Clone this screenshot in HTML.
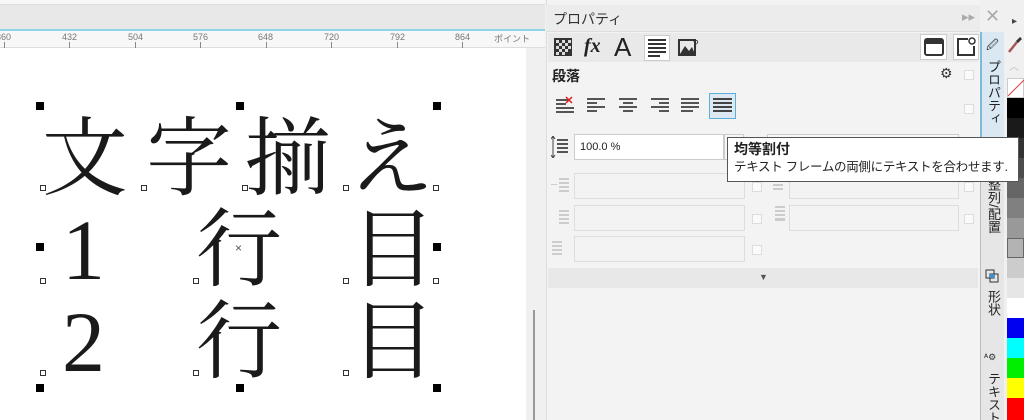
<!DOCTYPE html>
<html style="width:1024px;height:420px;overflow:hidden"><head><meta charset="utf-8"><style>
*{margin:0;padding:0;box-sizing:border-box}
body{width:1024px;height:420px;overflow:hidden;background:#f0f0f0;font-family:"Liberation Sans","Noto Sans CJK JP",sans-serif;position:relative}
.a{position:absolute}
.h{position:absolute;width:8px;height:8px;background:#000}
.s{position:absolute;width:6px;height:6px;border:1px solid #333;background:#fff}
.ch{position:absolute;font-family:"Liberation Serif","Noto Serif CJK JP",serif;font-size:86px;line-height:86px;color:#1a1a1a}
.inp{position:absolute;height:26px;border:1px solid #ddd;background:#f3f3f3}
.cb{position:absolute;width:10px;height:10px;border:1px solid #ddd;background:#fafafa}
.sw{position:absolute;left:1007px;width:17px;height:20px}
.vt{position:absolute;writing-mode:vertical-rl;font-size:13px;color:#222;white-space:nowrap;height:90px;overflow:hidden}
</style></head><body>
<div class="a" style="left:0;top:0;width:545px;height:5px;background:#f7f7f7;border-bottom:1px solid #ddd"></div>
<div class="a" style="left:0;top:5px;width:545px;height:25px;background:#e8e8e8"></div>
<div class="a" style="left:0;top:29px;width:545px;height:2px;background:#8fd3e6"></div>
<div class="a" style="left:0;top:31px;width:545px;height:17px;background:#f7f7f7;border-bottom:1px solid #ddd;font-size:9px;color:#777">
<span class="a" style="left:-4px;top:1px">360</span><span class="a" style="left:62px;top:1px">432</span><span class="a" style="left:128px;top:1px">504</span><span class="a" style="left:193px;top:1px">576</span><span class="a" style="left:258px;top:1px">648</span><span class="a" style="left:324px;top:1px">720</span><span class="a" style="left:390px;top:1px">792</span><span class="a" style="left:455px;top:1px">864</span><span class="a" style="left:494px;top:1px">ポイント</span>
<svg class="a" style="left:0;top:9px" width="545" height="8"><g stroke="#888"><line x1="4.5" y1="2" x2="4.5" y2="8"/><line x1="69.5" y1="2" x2="69.5" y2="8"/><line x1="135.5" y1="2" x2="135.5" y2="8"/><line x1="200.5" y1="2" x2="200.5" y2="8"/><line x1="266.5" y1="2" x2="266.5" y2="8"/><line x1="331.5" y1="2" x2="331.5" y2="8"/><line x1="397.5" y1="2" x2="397.5" y2="8"/><line x1="462.5" y1="2" x2="462.5" y2="8"/></g></svg>
</div>
<div class="a" style="left:0;top:48px;width:526px;height:372px;background:#fff"></div>
<div class="a" style="left:533px;top:310px;width:2px;height:110px;background:#999"></div>
<div class="ch" style="left:42px;top:116px">文</div>
<div class="ch" style="left:146px;top:116px">字</div>
<div class="ch" style="left:245px;top:116px">揃</div>
<div class="ch" style="left:348px;top:116px">え</div>
<div class="ch" style="left:62px;top:207px">1</div>
<div class="ch" style="left:196px;top:207px">行</div>
<div class="ch" style="left:350px;top:207px">目</div>
<div class="ch" style="left:62px;top:299px">2</div>
<div class="ch" style="left:196px;top:299px">行</div>
<div class="ch" style="left:350px;top:299px">目</div>
<div class="a" style="left:235px;top:241px;font-size:12px;color:#555">×</div>
<div class="h" style="left:36px;top:102px"></div><div class="h" style="left:236px;top:102px"></div><div class="h" style="left:433px;top:102px"></div>
<div class="h" style="left:36px;top:243px"></div><div class="h" style="left:433px;top:243px"></div>
<div class="h" style="left:36px;top:384px"></div><div class="h" style="left:236px;top:384px"></div><div class="h" style="left:433px;top:384px"></div>
<div class="s" style="left:40px;top:185px"></div><div class="s" style="left:141px;top:185px"></div><div class="s" style="left:242px;top:185px"></div><div class="s" style="left:343px;top:185px"></div><div class="s" style="left:433px;top:185px"></div>
<div class="s" style="left:40px;top:278px"></div><div class="s" style="left:193px;top:278px"></div><div class="s" style="left:343px;top:278px"></div><div class="s" style="left:433px;top:278px"></div>
<div class="s" style="left:40px;top:370px"></div><div class="s" style="left:193px;top:370px"></div><div class="s" style="left:343px;top:370px"></div>
<div class="a" style="left:546px;top:0;width:434px;height:420px;background:#f3f3f3;border-left:1px solid #ddd"></div>
<div class="a" style="left:546px;top:5px;width:434px;height:27px;background:#ececec;border-bottom:1px solid #ddd"></div>
<div class="a" style="left:553px;top:9px;font-size:14px;color:#333">プロパティ</div>
<div class="a" style="left:962px;top:9px;font-size:13px;color:#aaa">▸▸</div>
<div class="a" style="left:985px;top:6px;font-size:18px;color:#aaa">✕</div>
<div class="a" style="left:548px;top:33px;width:430px;height:29px;background:#e9e9e9"></div>
<svg class="a" style="left:553px;top:37px" width="20" height="20"><rect x="1" y="1" width="18" height="18" fill="#333"/><g fill="#ddd"><rect x="3" y="3" width="3" height="3"/><rect x="9" y="3" width="3" height="3"/><rect x="15" y="3" width="3" height="3"/><rect x="6" y="6" width="3" height="3"/><rect x="12" y="6" width="3" height="3"/><rect x="3" y="9" width="3" height="3"/><rect x="9" y="9" width="3" height="3"/><rect x="15" y="9" width="3" height="3"/><rect x="6" y="12" width="3" height="3"/><rect x="12" y="12" width="3" height="3"/><rect x="3" y="15" width="3" height="3"/><rect x="9" y="15" width="3" height="3"/></g></svg>
<div class="a" style="left:584px;top:35px;font-size:20px;font-style:italic;font-weight:bold;font-family:'Liberation Serif',serif;color:#222">fx</div>
<div class="a" style="left:614px;top:32px;font-size:26px;color:#222">A</div>
<div class="a" style="left:644px;top:35px;width:26px;height:26px;background:#fff;border:1px solid #ccc"></div>
<svg class="a" style="left:648px;top:39px" width="18" height="18"><g fill="#333"><rect y="0" width="18" height="2"/><rect y="4" width="18" height="2"/><rect y="8" width="18" height="2"/><rect y="12" width="18" height="2"/><rect y="16" width="12" height="2"/></g></svg>
<svg class="a" style="left:678px;top:37px" width="22" height="20"><rect x="1" y="3" width="16" height="15" fill="none" stroke="#333" stroke-width="2"/><path d="M2 17 L7 9 L11 14 L14 10 L17 17Z" fill="#333"/><text x="15" y="10" font-size="10" font-family="Liberation Sans" fill="#333">?</text></svg>
<div class="a" style="left:920px;top:34px;width:27px;height:26px;background:#fff;border:1px solid #ccc"></div>
<svg class="a" style="left:924px;top:38px" width="20" height="18"><rect x="1" y="1" width="18" height="16" rx="2" fill="none" stroke="#333" stroke-width="2"/><rect x="1" y="1" width="18" height="5" fill="#333"/></svg>
<div class="a" style="left:953px;top:34px;width:26px;height:26px;background:#fff;border:1px solid #ccc"></div>
<svg class="a" style="left:956px;top:37px" width="20" height="20"><path d="M12 2 H2 V18 H18 V9" fill="none" stroke="#333" stroke-width="2"/><circle cx="16" cy="4" r="3" fill="none" stroke="#333" stroke-width="1.5"/></svg>
<div class="a" style="left:552px;top:66px;font-size:14px;font-weight:bold;color:#222">段落</div>
<div class="a" style="left:940px;top:65px;font-size:14px;color:#333">⚙</div>
<div class="cb" style="left:964px;top:70px"></div>
<svg class="a" style="left:555px;top:96px" width="180" height="20"><g fill="#555">
<rect x="1" y="3" width="14" height="2"/><rect x="1" y="7" width="10" height="2"/><rect x="1" y="11" width="18" height="2"/><rect x="1" y="15" width="18" height="2"/>
<rect x="32" y="2" width="18" height="2"/><rect x="32" y="6" width="10" height="2"/><rect x="32" y="10" width="18" height="2"/><rect x="32" y="14" width="10" height="2"/>
<rect x="64" y="2" width="18" height="2"/><rect x="68" y="6" width="10" height="2"/><rect x="64" y="10" width="18" height="2"/><rect x="68" y="14" width="10" height="2"/>
<rect x="96" y="2" width="18" height="2"/><rect x="104" y="6" width="10" height="2"/><rect x="96" y="10" width="18" height="2"/><rect x="104" y="14" width="10" height="2"/>
<rect x="126" y="2" width="18" height="2"/><rect x="126" y="6" width="18" height="2"/><rect x="126" y="10" width="18" height="2"/><rect x="126" y="14" width="12" height="2"/>
</g><path d="M11 1 L17 7 M17 1 L11 7" stroke="#d22" stroke-width="1.5"/></svg>
<div class="a" style="left:709px;top:93px;width:27px;height:26px;background:#dce9f3;border:1px solid #5ab0d8"></div>
<svg class="a" style="left:713px;top:98px" width="19" height="16"><g fill="#444"><rect y="0" width="19" height="2"/><rect y="4" width="19" height="2"/><rect y="8" width="19" height="2"/><rect y="12" width="19" height="2"/></g></svg>
<div class="cb" style="left:964px;top:104px"></div>
<svg class="a" style="left:551px;top:136px" width="18" height="22"><path d="M2 1V21 M0 3 L2 0 L4 3 M0 19 L2 22 L4 19" stroke="#444" fill="none"/><g fill="#555"><rect x="6" y="3" width="11" height="2"/><rect x="6" y="7" width="11" height="2"/><rect x="6" y="11" width="11" height="2"/><rect x="6" y="15" width="11" height="2"/></g></svg>
<div class="a" style="left:574px;top:134px;width:150px;height:26px;background:#fff;border:1px solid #ccc;font-size:11px;color:#222;padding:6px 5px">100.0 %</div>
<div class="a" style="left:724px;top:134px;width:20px;height:26px;border:1px solid #ccc;background:#f7f7f7"></div>
<div class="a" style="left:767px;top:134px;width:192px;height:26px;border:1px solid #ccc;background:#f7f7f7"></div>
<div class="inp" style="left:574px;top:173px;width:171px"></div><div class="cb" style="left:752px;top:182px"></div>
<div class="inp" style="left:789px;top:173px;width:170px"></div><div class="cb" style="left:964px;top:182px"></div>
<div class="inp" style="left:574px;top:205px;width:171px"></div><div class="cb" style="left:752px;top:214px"></div>
<div class="inp" style="left:789px;top:205px;width:170px"></div><div class="cb" style="left:964px;top:214px"></div>
<div class="inp" style="left:574px;top:236px;width:171px"></div><div class="cb" style="left:752px;top:245px"></div>
<svg class="a" style="left:551px;top:176px" width="20" height="90"><g fill="#ccc"><rect x="8" y="2" width="10" height="2"/><rect x="8" y="6" width="10" height="2"/><rect x="8" y="10" width="10" height="2"/><rect x="8" y="14" width="10" height="2"/><rect x="0" y="8" width="6" height="1"/>
<rect x="8" y="34" width="10" height="2"/><rect x="8" y="38" width="10" height="2"/><rect x="8" y="42" width="10" height="2"/><rect x="8" y="46" width="10" height="2"/>
<rect x="1" y="65" width="10" height="2"/><rect x="1" y="69" width="10" height="2"/><rect x="1" y="73" width="10" height="2"/><rect x="1" y="77" width="10" height="2"/></g></svg>
<svg class="a" style="left:771px;top:176px" width="16" height="60"><g fill="#ccc"><rect x="2" y="4" width="10" height="2"/><rect x="2" y="8" width="10" height="2"/><rect x="2" y="12" width="10" height="2"/><rect x="4" y="30" width="10" height="2"/><rect x="4" y="34" width="10" height="2"/><rect x="4" y="38" width="10" height="2"/><rect x="4" y="42" width="10" height="3"/></g></svg>
<div class="a" style="left:548px;top:268px;width:430px;height:20px;background:#e8e8e8"></div>
<div class="a" style="left:759px;top:272px;font-size:9px;color:#555">▼</div>
<div class="a" style="left:980px;top:32px;width:24px;height:388px;background:#e6e6e6;border-left:1px solid #bbb;overflow:hidden"></div>
<div class="a" style="left:980px;top:32px;width:24px;height:105px;background:#dae8f4;border-left:2px solid #7fb9dc"></div>
<div class="a" style="left:986px;top:36px;font-size:12px;color:#333">🖉</div>
<div class="vt" style="left:984px;top:60px;height:75px">プロパティ</div>
<div class="vt" style="left:984px;top:178px;height:80px">整列/配置</div>
<svg class="a" style="left:985px;top:269px" width="14" height="14"><rect x="1" y="1" width="8" height="8" fill="none" stroke="#333"/><rect x="5" y="5" width="8" height="8" fill="none" stroke="#333"/><rect x="5" y="5" width="4" height="4" fill="#3a8fd0"/></svg>
<div class="vt" style="left:984px;top:290px;height:40px">形状</div>
<div class="a" style="left:984px;top:352px;font-size:9px;color:#333">ᴬ⚙</div>
<div class="vt" style="left:984px;top:372px;height:48px">テキスト</div>
<div class="a" style="left:1004px;top:0;width:20px;height:420px;background:#f0f0f0"></div>
<div class="a" style="left:1012px;top:16px;font-size:10px;color:#444">▸</div>
<svg class="a" style="left:1007px;top:36px" width="16" height="18"><path d="M2 16 L10 6" stroke="#a55" stroke-width="2.5"/><path d="M9 5 L13 1 L15 3 L11 7Z" fill="#333"/></svg>
<div class="a" style="left:1009px;top:58px;font-size:10px;color:#bbb">︿</div>
<div class="sw" style="top:78px;background:#fff;border:1px solid #ccc"></div>
<svg class="a" style="left:1007px;top:78px" width="17" height="20"><line x1="1" y1="18" x2="17" y2="2" stroke="#d44"/></svg>
<div class="sw" style="top:98px;background:#000"></div>
<div class="sw" style="top:118px;background:#1a1a1a"></div>
<div class="sw" style="top:138px;background:#333"></div>
<div class="sw" style="top:158px;background:#4d4d4d"></div>
<div class="sw" style="top:178px;background:#666"></div>
<div class="sw" style="top:198px;background:#808080"></div>
<div class="sw" style="top:218px;background:#999"></div>
<div class="sw" style="top:238px;background:#b3b3b3;border:1px solid #666"></div>
<div class="sw" style="top:258px;background:#ccc"></div>
<div class="sw" style="top:278px;background:#e6e6e6"></div>
<div class="sw" style="top:298px;background:#fff"></div>
<div class="sw" style="top:318px;background:#0000f0"></div>
<div class="sw" style="top:338px;background:#00ffff"></div>
<div class="sw" style="top:358px;background:#00ee00"></div>
<div class="sw" style="top:378px;background:#ffff00"></div>
<div class="sw" style="top:398px;background:#ff0000;height:22px"></div>
<div class="a" style="left:727px;top:137px;width:292px;height:45px;background:#fff;border:1px solid #555;padding:3px 6px;color:#222;z-index:10">
<div style="font-size:14px;font-weight:bold;line-height:17px">均等割付</div>
<div style="font-size:12.5px;line-height:18px;white-space:nowrap;letter-spacing:-0.3px">テキスト フレームの両側にテキストを合わせます.</div></div>
</body></html>
